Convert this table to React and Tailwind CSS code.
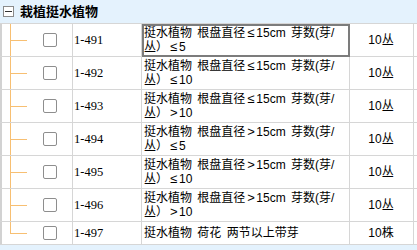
import React from 'react'

const ROWS = [
  { code: '1-491', lines: ['挺水植物 根盘直径≤15cm 芽数(芽/', '丛）≤5'], unit: '10丛', selected: true },
  { code: '1-492', lines: ['挺水植物 根盘直径≤15cm 芽数(芽/', '丛）≤10'], unit: '10丛' },
  { code: '1-493', lines: ['挺水植物 根盘直径≤15cm 芽数(芽/', '丛）>10'], unit: '10丛' },
  { code: '1-494', lines: ['挺水植物 根盘直径>15cm 芽数(芽/', '丛）≤5'], unit: '10丛' },
  { code: '1-495', lines: ['挺水植物 根盘直径>15cm 芽数(芽/', '丛）≤10'], unit: '10丛' },
  { code: '1-496', lines: ['挺水植物 根盘直径>15cm 芽数(芽/', '丛）>10'], unit: '10丛' },
  { code: '1-497', lines: ['挺水植物 荷花 两节以上带芽'], unit: '10株' },
]

const CJK = { fontFamily: '"Liberation Sans", "Noto Sans CJK SC", sans-serif' }
const SERIF = { fontFamily: '"Liberation Serif", "Noto Sans CJK SC", serif' }

// comparison signs are drawn full width, like the CJK glyphs around them
function Line({ text }) {
  const parts = text.split(/([≤>])/)
  return (
    <div className="whitespace-pre h-[14px]">
      {parts.map((p, i) =>
        p === '≤' || p === '>' ? (
          <span key={i} className="inline-block w-[11px] pl-[2px] leading-[14px] text-[13px]">{p}</span>
        ) : (
          p
        )
      )}
    </div>
  )
}

function TreeCell({ last }) {
  return (
    <div className="relative w-[73px] shrink-0 border-r border-[#d6d6d6] flex items-center">
      <div className="w-[2px] self-stretch bg-[#d2d2d2]" />
      {/* tree connector */}
      <span className={`absolute left-[10px] top-0 w-px bg-[#f7bf72] ${last ? 'h-1/2' : 'h-full'}`} />
      <span className="absolute left-[10px] top-1/2 w-[17px] h-px bg-[#f7bf72]" />
      <div className="ml-[41px] w-[14px] h-[14px] rounded-[2px] border border-[#8e8e8e] bg-white" />
    </div>
  )
}

function Row({ row, last }) {
  const tall = row.lines.length > 1
  return (
    <div className={`flex border-b border-[#d6d6d6] ${tall ? 'h-[33px]' : 'h-[23px]'}`}>
      <TreeCell last={last} />
      <div className="w-[69px] shrink-0 border-r border-[#d6d6d6] flex items-center pl-[1px] text-[12.5px] text-black" style={SERIF}>
        {row.code}
      </div>
      <div className="relative w-[208px] shrink-0 border-r border-[#d6d6d6] flex flex-col justify-center pl-[2px] text-[12px] leading-[14px] text-black [word-spacing:2px]" style={CJK}>
        {row.lines.map((l, i) => (
          <Line key={i} text={l} />
        ))}
        {row.selected && <div className="absolute left-0 -right-px top-0 -bottom-px border-2 border-[#7c7c7c]" />}
      </div>
      <div className="w-[64px] shrink-0 border-r border-[#d6d6d6] flex items-center justify-center pr-[1px] text-[12px] text-black" style={CJK}>
        {row.unit}
      </div>
      <div className="flex-1 bg-white" />
    </div>
  )
}

export default function App() {
  return (
    <div className="w-[417px] h-[250px] overflow-hidden bg-white flex flex-col">
      <div className="h-[24px] shrink-0 bg-[#e4f2fd] border-b border-[#d6d6d6] flex items-center">
        <div className="ml-[3px] w-[11px] h-[11px] border border-[#8a8a8a] bg-white flex items-center justify-center">
          <span className="w-[7px] h-px bg-[#333]" />
        </div>
        <span className="ml-[6px] text-[13px] font-bold text-black" style={CJK}>栽植挺水植物</span>
      </div>
      {ROWS.map((r, i) => (
        <Row key={r.code} row={r} last={i === ROWS.length - 1} />
      ))}
      <div className="flex-1 bg-[#e4f2fd]" />
    </div>
  )
}
